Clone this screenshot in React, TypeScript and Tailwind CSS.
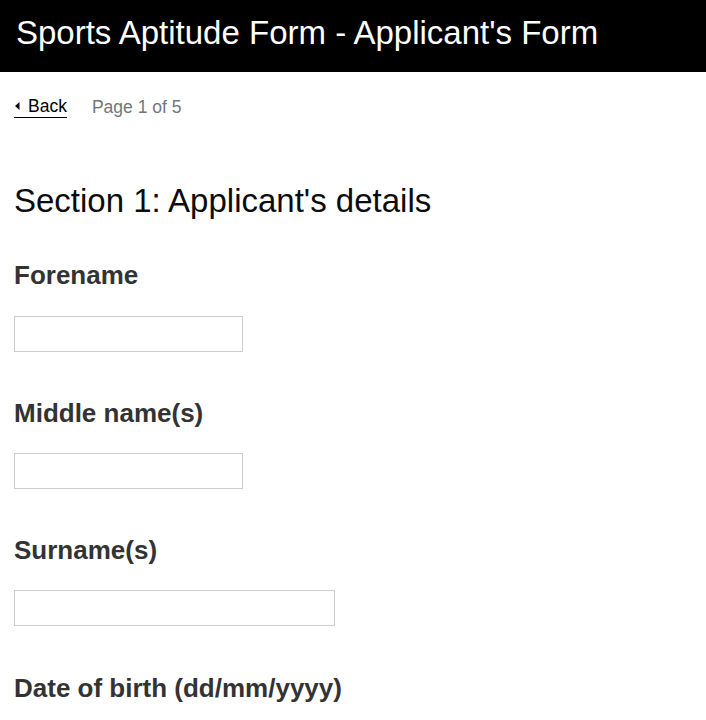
export default function App() {
  const fields = [
    { label: "Forename", width: "w-[229px]", mt: "mt-[39px]", gap: "mt-[26px]" },
    { label: "Middle name(s)", width: "w-[229px]", mt: "mt-[46px]", gap: "mt-[25px]" },
    { label: "Surname(s)", width: "w-[321px]", mt: "mt-[46px]", gap: "mt-[25px]" },
  ];

  return (
    <div className="min-h-screen bg-white font-['Liberation_Sans',Arial,sans-serif]">
      <header className="h-[72px] bg-black px-4 pt-[13px]">
        <h1 className="text-[33px] leading-[40px] text-white">
          Sports Aptitude Form - Applicant's Form
        </h1>
      </header>

      <main className="px-[14px]">
        <div className="mt-[24px] flex items-center gap-[25px] text-[17.5px] leading-[20px]">
          <a href="#" className="flex items-center border-b border-black pb-[1px] text-black">
            <svg width="5" height="8" viewBox="0 0 5 8" className="ml-[1px] mr-[8px]">
              <path d="M4.5 0 L0 4 L4.5 8 Z" fill="#0b0c0c" />
            </svg>
            Back
          </a>
          <span className="text-[#6f777b]">Page 1 of 5</span>
        </div>

        <h2 className="mt-[63px] text-[33px] leading-[40px] text-[#0b0c0c]">
          Section 1: Applicant's details
        </h2>

        {fields.map((f) => (
          <div key={f.label} className={f.mt}>
            <label className="block text-[26px] font-bold leading-[30px] text-[#333]">{f.label}</label>
            <input
              type="text"
              className={`${f.gap} block h-[36px] ${f.width} border border-[#ccc] outline-none`}
            />
          </div>
        ))}

        <div className="mt-[47px]">
          <label className="block text-[26px] font-bold leading-[30px] text-[#333]">
            Date of birth (dd/mm/yyyy)
          </label>
        </div>
      </main>
    </div>
  );
}
